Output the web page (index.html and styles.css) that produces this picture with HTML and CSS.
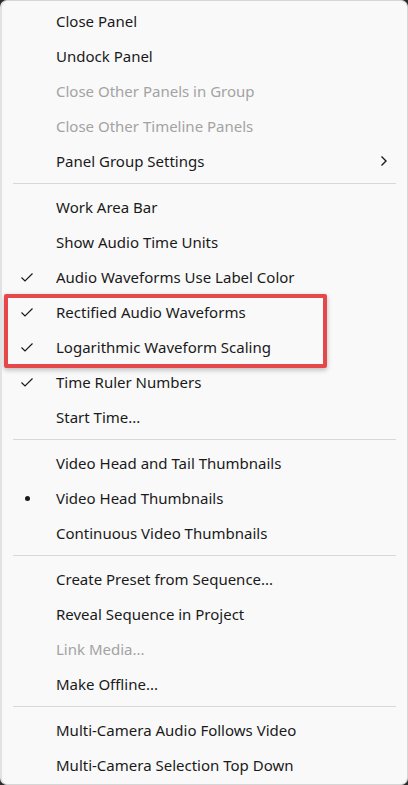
FILE: index.html
```html
<!DOCTYPE html>
<html>
<head>
<meta charset="utf-8">
<link rel="stylesheet" href="styles.css">
</head>
<body>
<div class="menu">
  <div class="item">Close Panel</div>
  <div class="item">Undock Panel</div>
  <div class="item disabled">Close Other Panels in Group</div>
  <div class="item disabled">Close Other Timeline Panels</div>
  <div class="item">Panel Group Settings
    <svg class="chev" width="10" height="14" viewBox="0 0 10 14"><path d="M2.5 2.5 L7 7 L2.5 11.5" fill="none" stroke="#1a1a1a" stroke-width="1.4"/></svg>
  </div>
  <div class="sep"></div>
  <div class="item">Work Area Bar</div>
  <div class="item">Show Audio Time Units</div>
  <div class="item"><svg class="check" width="14" height="12" viewBox="0 0 14 12"><path d="M1.5 6.5 L5 10 L12.5 2.5" fill="none" stroke="#1a1a1a" stroke-width="1.2"/></svg>Audio Waveforms Use Label Color</div>
  <div class="highlight">
    <div class="item"><svg class="check" width="14" height="12" viewBox="0 0 14 12"><path d="M1.5 6.5 L5 10 L12.5 2.5" fill="none" stroke="#1a1a1a" stroke-width="1.2"/></svg>Rectified Audio Waveforms</div>
    <div class="item"><svg class="check" width="14" height="12" viewBox="0 0 14 12"><path d="M1.5 6.5 L5 10 L12.5 2.5" fill="none" stroke="#1a1a1a" stroke-width="1.2"/></svg>Logarithmic Waveform Scaling</div>
  </div>
  <div class="item"><svg class="check" width="14" height="12" viewBox="0 0 14 12"><path d="M1.5 6.5 L5 10 L12.5 2.5" fill="none" stroke="#1a1a1a" stroke-width="1.2"/></svg>Time Ruler Numbers</div>
  <div class="item">Start Time...</div>
  <div class="sep"></div>
  <div class="item">Video Head and Tail Thumbnails</div>
  <div class="item"><span class="dot"></span>Video Head Thumbnails</div>
  <div class="item">Continuous Video Thumbnails</div>
  <div class="sep"></div>
  <div class="item">Create Preset from Sequence...</div>
  <div class="item">Reveal Sequence in Project</div>
  <div class="item disabled">Link Media...</div>
  <div class="item">Make Offline...</div>
  <div class="sep"></div>
  <div class="item">Multi-Camera Audio Follows Video</div>
  <div class="item">Multi-Camera Selection Top Down</div>
</div>
</body>
</html>
```
FILE: styles.css
```css
html, body {
  margin: 0;
  padding: 0;
  background: #2b2b2b;
}
.menu {
  width: 408px;
  height: 785px;
  box-sizing: border-box;
  background: #f9f9f9;
  border: 1px solid #d6d6d6;
  border-left: 2px solid #e2e2e2;
  border-radius: 7px;
  padding-top: 2px;
  font-family: "Noto Sans", sans-serif;
  font-size: 15px;
  color: #1a1a1a;
  overflow: hidden;
}
.item {
  position: relative;
  height: 35px;
  display: flex;
  align-items: center;
  padding-left: 54px;
  white-space: nowrap;
}
.disabled {
  color: #a3a3a3;
}
.check {
  position: absolute;
  left: 18px;
  top: 12px;
}
.dot {
  position: absolute;
  left: 23px;
  top: 16px;
  width: 5px;
  height: 5px;
  border-radius: 50%;
  background: #1a1a1a;
}
.chev {
  position: absolute;
  left: 377px;
  top: 11px;
}
.sep {
  height: 1px;
  margin: 5px 11px 5px 11px;
  background: #d8d8d8;
}
.highlight {
  position: relative;
}
.highlight::after {
  content: "";
  position: absolute;
  left: 2px;
  top: 0px;
  width: 323px;
  height: 74px;
  border: 4px solid #e5484b;
  box-sizing: border-box;
  border-radius: 2px;
  box-shadow: 0 2px 5px rgba(0,0,0,0.25);
  pointer-events: none;
}
```
